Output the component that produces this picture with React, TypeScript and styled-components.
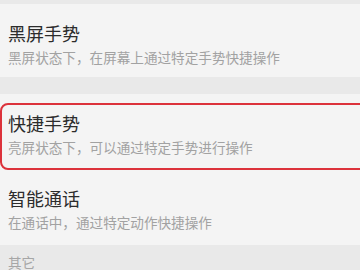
import * as React from "react";
import styled, { createGlobalStyle } from "styled-components";

const GlobalStyle = createGlobalStyle`
  html, body {
    margin: 0;
    padding: 0;
    background: #e9e9e9;
    font-family: "Noto Sans CJK SC", "Noto Sans", sans-serif;
  }
`;

const Page = styled.div`
  width: 360px;
  height: 270px;
  overflow: hidden;
  background: #e9e9e9;
  display: flex;
  flex-direction: column;
  padding-top: 4px;
  box-sizing: border-box;
`;

const Group = styled.div`
  background: #f4f4f4;
  display: flex;
  flex-direction: column;
`;

const Spacer = styled.div`
  height: 17px;
  flex: none;
`;

const Row = styled.div<{ $height: number }>`
  position: relative;
  height: ${(p) => p.$height}px;
  padding: 16px 0 0 8px;
  box-sizing: border-box;
  flex: none;
`;

const Highlight = styled.div`
  position: absolute;
  top: 9px;
  bottom: -1px;
  left: 0;
  right: -12px;
  border: 2px solid #dc323b;
  border-radius: 8px;
  pointer-events: none;
`;

const Title = styled.div`
  font-size: 18px;
  line-height: 26px;
  color: #2c2c2c;
`;

const Subtitle = styled.div`
  margin-top: 1px;
  font-size: 13.6px;
  line-height: 20px;
  color: #a2a2a2;
  white-space: nowrap;
`;

const SectionHeader = styled.div`
  padding: 7px 0 0 8px;
  font-size: 13.6px;
  line-height: 20px;
  color: #a6a6a6;
`;

interface IItem {
  title: string;
  desc: string;
  height: number;
  active?: boolean;
}

const Item = ({ title, desc, height, active }: IItem) => (
  <Row $height={height}>
    <Title>{title}</Title>
    <Subtitle>{desc}</Subtitle>
    {active && <Highlight />}
  </Row>
);

export default function App() {
  return (
    <Page>
      <GlobalStyle />
      <Group>
        <Item
          title="黑屏手势"
          desc="黑屏状态下，在屏幕上通过特定手势快捷操作"
          height={73}
        />
      </Group>
      <Spacer />
      <Group>
        <Item
          title="快捷手势"
          desc="亮屏状态下，可以通过特定手势进行操作"
          height={75}
          active
        />
        <Item
          title="智能通话"
          desc="在通话中，通过特定动作快捷操作"
          height={76}
        />
      </Group>
      <SectionHeader>其它</SectionHeader>
    </Page>
  );
}
